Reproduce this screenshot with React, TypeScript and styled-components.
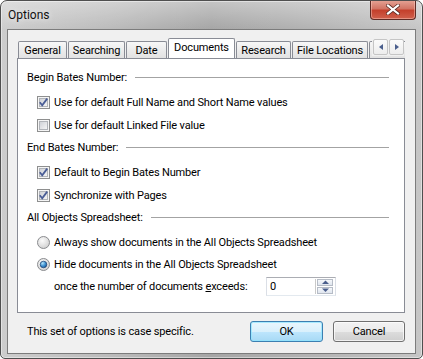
import styled, { createGlobalStyle } from "styled-components";

const GlobalStyle = createGlobalStyle`
  html, body { margin: 0; padding: 0; background: #ffffff; }
  body {
    font-family: Roboto, "Liberation Sans", sans-serif;
    font-size: 11px;
    letter-spacing: -0.15px;
    color: #000;
  }
  #root { width: 423px; height: 359px; }
`;

const Window = styled.div`
  width: 423px;
  height: 359px;
  box-sizing: border-box;
  display: flex;
  flex-direction: column;
  border: 1px solid #4f4f4f;
  border-radius: 7px 7px 5px 5px;
  overflow: hidden;
  background:
    linear-gradient(180deg, rgba(255, 255, 255, 0.35) 0px, rgba(255, 255, 255, 0) 28px),
    linear-gradient(90deg, #cdcdcd 0%, #bcbcbc 25%, #a6a6a6 50%, #b4b4b4 75%, #c6c6c6 100%);
  box-shadow: inset 0 0 0 1px rgba(255, 255, 255, 0.45);
`;

const TitleBar = styled.div`
  height: 28px;
  flex: none;
  display: flex;
  align-items: flex-start;
  padding-left: 7px;
`;

const Title = styled.span`
  font-size: 12px;
  letter-spacing: 0;
  line-height: 28px;
  color: #111;
  text-shadow: 0 0 6px rgba(255, 255, 255, 0.9);
`;

const CloseButton = styled.div`
  margin-left: auto;
  margin-right: 6px;
  margin-top: -1px;
  width: 46px;
  height: 20px;
  box-sizing: border-box;
  border: 1px solid #5e2b25;
  border-top: none;
  border-radius: 0 0 4px 4px;
  background: linear-gradient(180deg, #e6a597 0%, #d27565 45%, #c4402c 55%, #d0604c 100%);
  box-shadow: inset 0 0 0 1px rgba(255, 210, 200, 0.45);
  display: flex;
  align-items: center;
  justify-content: center;
`;

const Client = styled.div`
  flex: 1;
  margin: 0 6px 4px 6px;
  border: 1px solid #7c7c7c;
  background: #f0f0f0;
  display: flex;
  flex-direction: column;
  padding: 8px 10px 0 9px;
`;

const TabStrip = styled.div`
  position: relative;
  height: 20px;
  display: flex;
  align-items: flex-end;
  gap: 1px;
  padding-left: 1px;
  overflow: hidden;
`;

const Tab = styled.div<{ $active?: boolean; $w: number }>`
  flex: none;
  width: ${(p) => p.$w}px;
  height: ${(p) => (p.$active ? 21 : 17)}px;
  box-sizing: border-box;
  border: 1px solid #898c95;
  border-bottom: none;
  border-radius: 2px 2px 0 0;
  margin-bottom: ${(p) => (p.$active ? -1 : 0)}px;
  background: ${(p) =>
    p.$active ? "#ffffff" : "linear-gradient(180deg, #f7f7f7 0%, #ececec 50%, #e2e2e2 100%)"};
  display: flex;
  align-items: center;
  justify-content: center;
  padding-bottom: ${(p) => (p.$active ? 3 : 0)}px;
  z-index: ${(p) => (p.$active ? 1 : 0)};
  white-space: nowrap;
`;

const TabScroller = styled.div`
  position: absolute;
  right: 1px;
  top: 1px;
  height: 17px;
  padding-left: 1px;
  display: flex;
  gap: 1px;
  background: #f0f0f0;
  z-index: 2;
`;

const ScrollButton = styled.div`
  width: 15px;
  height: 16px;
  box-sizing: border-box;
  border: 1px solid #c5c5c5;
  border-radius: 2px;
  background: linear-gradient(180deg, #fbfbfb, #ededed);
  display: flex;
  align-items: center;
  justify-content: center;
`;

const Panel = styled.div`
  height: 255px;
  box-sizing: border-box;
  border: 1px solid #898c95;
  background: #ffffff;
  padding: 10px 15px 0 9px;
`;

const GroupHeader = styled.div<{ $spaced?: boolean }>`
  height: 16px;
  margin-top: ${(p) => (p.$spaced ? 2 : 0)}px;
  display: flex;
  align-items: center;
  gap: 8px;
  white-space: nowrap;
  &::after {
    content: "";
    flex: 1;
    border-top: 1px solid #a3a3a3;
  }
`;

const OptionList = styled.div`
  padding: 6px 0 0 10px;
`;

const Row = styled.div<{ $h: number }>`
  height: ${(p) => p.$h}px;
  display: flex;
  align-items: center;
  gap: 4px;
  white-space: nowrap;
`;

const SubRow = styled.div`
  height: 22px;
  display: flex;
  align-items: center;
  padding-left: 17px;
`;

const SubLabel = styled.span`
  width: 212px;
  flex: none;
`;

const SpinField = styled.div`
  width: 70px;
  height: 19px;
  box-sizing: border-box;
  border: 1px solid #dbdfe6;
  border-top-color: #abadb3;
  border-bottom-color: #e3e9ef;
  background: #fff;
  display: flex;
  align-items: center;
`;

const SpinValue = styled.span`
  flex: 1;
  padding-left: 3px;
`;

const SpinButtons = styled.div`
  width: 16px;
  height: 15px;
  margin-right: 2px;
  border-left: 1px solid #c9c9c9;
  padding-left: 1px;
  display: flex;
  flex-direction: column;
  gap: 1px;
`;

const SpinButton = styled.div`
  flex: 1;
  border: 1px solid #b6bcc6;
  background: linear-gradient(180deg, #f6f8fb, #dfe5ee);
  display: flex;
  align-items: center;
  justify-content: center;
`;

const Footer = styled.div`
  margin-top: 8px;
  height: 21px;
  display: flex;
  align-items: center;
  gap: 10px;
  padding-left: 10px;
`;

const Note = styled.span`
  margin-right: auto;
`;

const Button = styled.div<{ $default?: boolean; $w: number }>`
  width: ${(p) => p.$w}px;
  height: 21px;
  box-sizing: border-box;
  border: 1px solid ${(p) => (p.$default ? "#3c7fb1" : "#707070")};
  border-radius: 3px;
  background: ${(p) =>
    p.$default
      ? "linear-gradient(180deg, #eaf6fd 0%, #d9f0fc 50%, #bee6fd 50%, #a7d9f5 100%)"
      : "linear-gradient(180deg, #f2f2f2 0%, #ebebeb 50%, #dddddd 50%, #cfcfcf 100%)"};
  box-shadow: inset 0 0 0 1px ${(p) => (p.$default ? "rgba(140, 230, 255, 0.7)" : "rgba(255, 255, 255, 0.7)")};
  display: flex;
  align-items: center;
  justify-content: center;
`;

const Underline = styled.span`
  text-decoration: underline;
`;

const CheckBox = ({ checked }: { checked?: boolean }) => (
  <svg width="13" height="13" viewBox="0 0 13 13">
    <defs>
      <linearGradient id="cbFill" x1="0" y1="0" x2="1" y2="1">
        <stop offset="0" stopColor="#cdd0d5" />
        <stop offset="1" stopColor="#f7f7f7" />
      </linearGradient>
    </defs>
    <rect x="0.5" y="0.5" width="12" height="12" fill="#f5f5f5" stroke="#8e8f8f" />
    <rect x="2.5" y="2.5" width="8" height="8" fill="url(#cbFill)" stroke="#b1b4b9" />
    {checked && (
      <path d="M2.8 6.3 L5.2 9.2 L10.2 2.6" fill="none" stroke="#4a5d96" strokeWidth="1.8" />
    )}
  </svg>
);

const Radio = ({ checked }: { checked?: boolean }) => (
  <svg width="13" height="13" viewBox="0 0 13 13">
    <defs>
      <radialGradient id="rbFill" cx="0.4" cy="0.35" r="0.7">
        <stop offset="0" stopColor="#fbfbfb" />
        <stop offset="1" stopColor="#cfcfcf" />
      </radialGradient>
      <radialGradient id="rbDot" cx="0.35" cy="0.3" r="0.8">
        <stop offset="0" stopColor="#b2e4fb" />
        <stop offset="0.55" stopColor="#3b8fd0" />
        <stop offset="1" stopColor="#174e8c" />
      </radialGradient>
    </defs>
    <circle cx="6.5" cy="6.5" r="6" fill="url(#rbFill)" stroke="#8a8c8f" />
    {checked && <circle cx="6.5" cy="6.5" r="3.3" fill="url(#rbDot)" stroke="#1c3f6e" strokeWidth="0.7" />}
  </svg>
);

const Arrow = ({ dir }: { dir: "left" | "right" | "up" | "down" }) => {
  const d = {
    left: "M5 1 L1 4 L5 7 Z",
    right: "M1 1 L5 4 L1 7 Z",
    up: "M0 4 L3.5 0.5 L7 4 Z",
    down: "M0 0.5 L3.5 4 L7 0.5 Z",
  }[dir];
  const horiz = dir === "left" || dir === "right";
  return (
    <svg width={horiz ? 6 : 7} height={horiz ? 8 : 4.5} viewBox={horiz ? "0 0 6 8" : "0 0 7 4.5"}>
      <path d={d} fill="#4a5e8c" />
    </svg>
  );
};

const tabs = [
  { label: "General", w: 49 },
  { label: "Searching", w: 57 },
  { label: "Date", w: 41 },
  { label: "Documents", w: 67, active: true },
  { label: "Research", w: 55 },
  { label: "File Locations", w: 76 },
];

export default function App() {
  return (
    <>
      <GlobalStyle />
      <Window>
        <TitleBar>
          <Title>Options</Title>
          <CloseButton>
            <svg width="14" height="11" viewBox="0 0 14 11">
              <path d="M2 1.5 L12 9.5 M12 1.5 L2 9.5" stroke="#5a2a22" strokeWidth="3.6" strokeLinecap="square" />
              <path d="M2 1.5 L12 9.5 M12 1.5 L2 9.5" stroke="#ffffff" strokeWidth="2.2" strokeLinecap="square" />
            </svg>
          </CloseButton>
        </TitleBar>
        <Client>
          <TabStrip>
            {tabs.map((t) => (
              <Tab key={t.label} $w={t.w} $active={t.active}>
                {t.label}
              </Tab>
            ))}
            <Tab $w={40} />
            <TabScroller>
              <ScrollButton>
                <Arrow dir="left" />
              </ScrollButton>
              <ScrollButton>
                <Arrow dir="right" />
              </ScrollButton>
            </TabScroller>
          </TabStrip>
          <Panel>
            <GroupHeader>Begin Bates Number:</GroupHeader>
            <OptionList>
              <Row $h={23}>
                <CheckBox checked />
                Use for default Full Name and Short Name values
              </Row>
              <Row $h={23}>
                <CheckBox />
                Use for default Linked File value
              </Row>
            </OptionList>
            <GroupHeader $spaced>End Bates Number:</GroupHeader>
            <OptionList>
              <Row $h={23}>
                <CheckBox checked />
                Default to Begin Bates Number
              </Row>
              <Row $h={23}>
                <CheckBox checked />
                Synchronize with Pages
              </Row>
            </OptionList>
            <GroupHeader $spaced>All Objects Spreadsheet:</GroupHeader>
            <OptionList>
              <Row $h={22}>
                <Radio />
                Always show documents in the All Objects Spreadsheet
              </Row>
              <Row $h={22}>
                <Radio checked />
                Hide documents in the All Objects Spreadsheet
              </Row>
              <SubRow>
                <SubLabel>
                  once the number of documents <Underline>e</Underline>xceeds:
                </SubLabel>
                <SpinField>
                  <SpinValue>0</SpinValue>
                  <SpinButtons>
                    <SpinButton>
                      <Arrow dir="up" />
                    </SpinButton>
                    <SpinButton>
                      <Arrow dir="down" />
                    </SpinButton>
                  </SpinButtons>
                </SpinField>
              </SubRow>
            </OptionList>
          </Panel>
          <Footer>
            <Note>This set of options is case specific.</Note>
            <Button $default $w={73}>OK</Button>
            <Button $w={72}>Cancel</Button>
          </Footer>
        </Client>
      </Window>
    </>
  );
}
